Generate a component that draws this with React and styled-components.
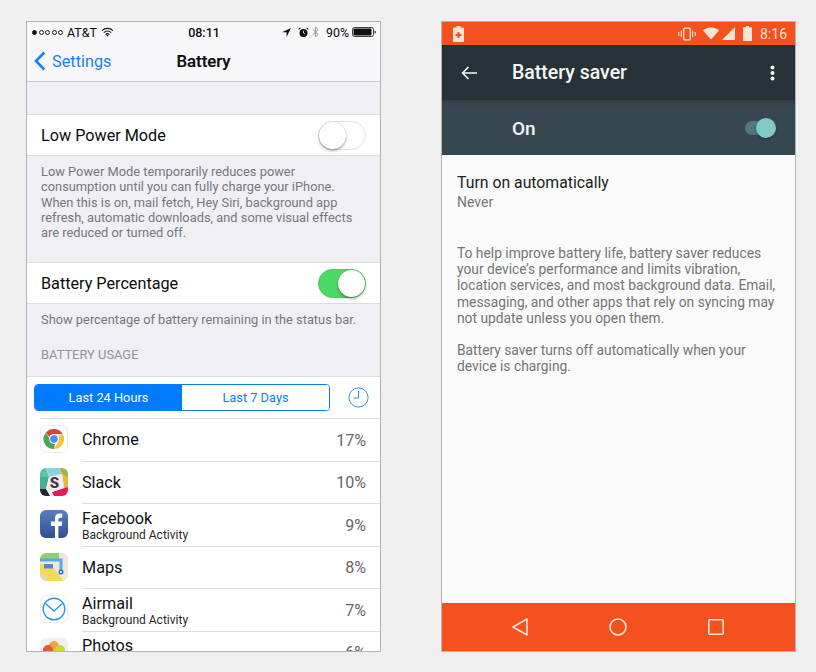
import React from "react";
import styled, { createGlobalStyle } from "styled-components";

const Global = createGlobalStyle`
  html, body { margin: 0; padding: 0; background: #efefef; }
  #root { width: 816px; height: 672px; overflow: hidden; }
`;

const Page = styled.div`
  display: flex;
  align-items: flex-start;
  gap: 60px;
  padding: 21px 0 0 26px;
`;
const Phone = styled.div`
  width: 355px;
  height: 631px;
  box-sizing: border-box;
  border: 1px solid #b4b4b6;
  overflow: hidden;
  display: flex;
  flex-direction: column;
  flex: none;
`;
const IosPhone = styled(Phone)`
  background: #efeff4;
  font-family: "Roboto", "Liberation Sans", sans-serif;
  color: #0b0b0b;
`;
const AndroidPhone = styled(Phone)`
  background: #fafafa;
  font-family: "Roboto", sans-serif;
`;

/* iOS */
const Header = styled.div`
  background: #f7f7f9;
  border-bottom: 1px solid #c9c9cd;
  height: 59px;
  flex: none;
`;
const StatusBar = styled.div`
  height: 20px;
  display: grid;
  grid-template-columns: 1fr auto 1fr;
  align-items: center;
  padding: 0 4px 0 5px;
  font-size: 12.4px;
`;
const StatusSide = styled.div`
  display: flex;
  align-items: center;
  justify-content: ${(p) => (p.$end ? "flex-end" : "flex-start")};
`;
const Dots = styled.span`
  display: inline-flex;
  gap: 1.5px;
  margin-right: 4px;
`;
const Dot = styled.i`
  width: 5px;
  height: 5px;
  box-sizing: border-box;
  border-radius: 50%;
  border: 0.7px solid #222;
  background: ${(p) => (p.$on ? "#111" : "transparent")};
`;
const StatusItem = styled.span`
  display: inline-flex;
  align-items: center;
  margin-right: ${(p) => p.$mr || 0}px;
`;
const Time = styled.span`
  font-size: 12.5px;
  font-weight: 500;
`;
const NavBar = styled.div`
  height: 38px;
  position: relative;
  display: flex;
  align-items: center;
  justify-content: center;
`;
const Back = styled.div`
  position: absolute;
  left: 7px;
  top: 9px;
  display: flex;
  align-items: center;
  gap: 6px;
  color: #1a7ff0;
  font-size: 16.3px;
`;
const NavTitle = styled.div`
  font-size: 16.8px;
  font-weight: 500;
  -webkit-text-stroke: 0.2px #0b0b0b;
`;
const Spacer = styled.div`
  height: ${(p) => p.$h}px;
  flex: none;
`;
const SettingRow = styled.div`
  height: 42px;
  flex: none;
  box-sizing: border-box;
  background: #fff;
  border-top: 1px solid #dcdce0;
  border-bottom: 1px solid #dcdce0;
  display: flex;
  align-items: center;
  justify-content: space-between;
  padding: 0 14px;
  font-size: 16.2px;
`;
const Track = styled.div`
  width: 48px;
  height: 29px;
  box-sizing: border-box;
  border-radius: 15px;
  position: relative;
  background: ${(p) => (p.$on ? "#4cd964" : "#fff")};
  border: 1px solid ${(p) => (p.$on ? "#4cc764" : "#e2e2e4")};
`;
const Knob = styled.div`
  position: absolute;
  top: 0;
  ${(p) => (p.$on ? "right: 0;" : "left: 0;")}
  width: 27px;
  height: 27px;
  border-radius: 50%;
  background: #fff;
  box-shadow: 0 2px 3px rgba(0, 0, 0, 0.3), 0 0 1px rgba(0, 0, 0, 0.3);
`;
const Note = styled.p`
  margin: 0;
  padding: ${(p) => p.$top}px 14px 0;
  height: ${(p) => p.$h}px;
  flex: none;
  box-sizing: border-box;
  font-size: 12.85px;
  line-height: 15.25px;
  color: #77777c;
`;
const SectionLabel = styled.div`
  height: 32px;
  flex: none;
  padding: 4px 14px 0;
  box-sizing: border-box;
  font-size: 12.9px;
  line-height: 14px;
  color: #939398;
`;
const Usage = styled.div`
  background: #fff;
  border-top: 1px solid #dcdce0;
  flex: 1;
  min-height: 0;
  overflow: hidden;
`;
const SegmentRow = styled.div`
  display: flex;
  align-items: center;
  padding: 7px 11px 7px 7px;
  gap: 18px;
`;
const Segments = styled.div`
  flex: 1;
  height: 27px;
  box-sizing: border-box;
  border: 1px solid #0a7cfa;
  border-radius: 4px;
  display: grid;
  grid-template-columns: 147px 1fr;
  overflow: hidden;
`;
const Segment = styled.div`
  display: flex;
  align-items: center;
  justify-content: center;
  font-size: 12.8px;
  background: ${(p) => (p.$active ? "#007aff" : "#fff")};
  color: ${(p) => (p.$active ? "#fff" : "#0a7cfa")};
`;
const AppList = styled.div`
  display: flex;
  flex-direction: column;
`;
const AppRow = styled.div`
  height: 42.5px;
  flex: none;
  box-sizing: border-box;
  margin-left: 13px;
  display: flex;
  ${(p) => p.$first && "border-top: 1px solid #dedee0;"}
`;
const AppIcon = styled.div`
  width: 28px;
  height: 28px;
  flex: none;
  margin-top: ${(p) => (p.$first ? 6 : 7)}px;
  border-radius: 6px;
  overflow: hidden;
`;
const AppBody = styled.div`
  flex: 1;
  margin-left: 14px;
  ${(p) => !p.$first && "border-top: 1px solid #dedee0;"}
  display: flex;
  align-items: ${(p) => (p.$clip ? "flex-start" : "center")};
  justify-content: space-between;
  padding: ${(p) => (p.$clip ? "5px 14px 0 0" : "1px 14px 0 0")};
`;
const AppText = styled.div`
  padding-top: ${(p) => (p.$sub ? 2 : 0)}px;
`;
const AppName = styled.div`
  font-size: 16.2px;
  line-height: 18px;
  color: #111;
`;
const AppSub = styled.div`
  font-size: 12px;
  line-height: 15px;
  color: #2a2a2a;
`;
const AppPct = styled.div`
  font-size: 16px;
  color: #66666a;
  ${(p) => p.$clip && "padding-top: 6px;"}
`;

/* Android */
const DroidStatus = styled.div`
  height: 23px;
  flex: none;
  background: #f4511e;
  display: flex;
  align-items: center;
  justify-content: space-between;
  padding: 0 8px 0 11px;
  color: #fde4da;
  font-size: 14px;
`;
const DroidIcons = styled.div`
  display: flex;
  align-items: center;
`;
const DroidIconSlot = styled.span`
  display: inline-flex;
  margin-right: ${(p) => p.$mr}px;
`;
const AppBar = styled.div`
  height: 55px;
  flex: none;
  background: #263238;
  color: #f5f7f7;
  display: flex;
  align-items: center;
  padding: 0 20px 0 19px;
  font-size: 19.5px;
  font-weight: 500;
`;
const AppBarTitle = styled.div`
  margin-left: 35px;
  flex: 1;
`;
const OnBar = styled.div`
  height: 55px;
  flex: none;
  box-sizing: border-box;
  padding: 1px 19px 0 70px;
  background: #37474f;
  box-shadow: inset 0 6px 6px -6px rgba(0, 0, 0, 0.3);
  color: #f5f7f7;
  display: flex;
  align-items: center;
  justify-content: space-between;
  font-size: 19px;
  font-weight: 500;
`;
const DroidSwitch = styled.div`
  width: 31px;
  height: 20px;
  position: relative;
`;
const DroidTrack = styled.div`
  position: absolute;
  left: 0;
  right: 2px;
  top: 3px;
  height: 14px;
  border-radius: 7px;
  background: #54767a;
`;
const DroidThumb = styled.div`
  position: absolute;
  right: 0;
  top: 0;
  width: 20px;
  height: 20px;
  border-radius: 50%;
  background: #80cbc4;
  box-shadow: 0 1px 2px rgba(0, 0, 0, 0.4);
`;
const DroidBody = styled.div`
  flex: 1;
  padding: 18px 15px 0;
  min-height: 0;
`;
const DroidTitle = styled.div`
  font-size: 15.8px;
  line-height: 19px;
  color: #212121;
`;
const DroidSub = styled.div`
  font-size: 14px;
  line-height: 20px;
  color: #757575;
  margin-bottom: 33px;
`;
const DroidPara = styled.p`
  margin: 0 0 16px;
  font-size: 13.8px;
  line-height: 16.2px;
  color: #757575;
`;
const DroidNav = styled.div`
  height: 48px;
  flex: none;
  box-sizing: border-box;
  padding-right: 2px;
  background: #f4511e;
  display: flex;
  align-items: center;
  justify-content: center;
`;
const NavKey = styled.div`
  width: 98px;
  display: flex;
  justify-content: center;
`;

/* Icons */
const Wifi = () => (
  <svg width="13" height="10" viewBox="0 0 14 11">
    <path d="M1 4a8.500 8.500 0 0 1 12 0M3 6.200a5.400 5.400 0 0 1 8 0M5 8.300a2.600 2.600 0 0 1 4 0" fill="none" stroke="#111" strokeWidth="1.300" />
    <path d="M7 10.600 5.800 9.200a1.700 1.700 0 0 1 2.400 0z" fill="#111" />
  </svg>
);
const Locate = () => (
  <svg width="9" height="9" viewBox="0 0 9 9"><path d="M9 0 0 4.200h4.600V9z" fill="#111" /></svg>
);
const Alarm = () => (
  <svg width="11" height="11" viewBox="0 0 11 11">
    <circle cx="5.500" cy="6" r="4" fill="#111" />
    <path d="M5.500 3.800V6l1.500 1" stroke="#fff" strokeWidth=".8" fill="none" />
    <path d="M.6 2.400 2.400.8M10.400 2.400 8.600.8" stroke="#111" strokeWidth="1.100" />
  </svg>
);
const Bluetooth = () => (
  <svg width="7" height="12" viewBox="0 0 7 12">
    <path d="M.7 3.200 6 8.400 3.400 11V1L6 3.600.7 8.800" fill="none" stroke="#8a8a8a" strokeWidth=".9" />
  </svg>
);
const IosBattery = () => (
  <svg width="24" height="10" viewBox="0 0 24 10">
    <rect x=".5" y=".5" width="21" height="9" rx="2" fill="none" stroke="#111" strokeWidth=".8" />
    <rect x="1.500" y="1.500" width="18" height="7" rx="1" fill="#111" />
    <path d="M22.600 3.400c.8.200 1.200.8 1.200 1.600s-.4 1.400-1.200 1.600z" fill="#111" />
  </svg>
);
const Chevron = () => (
  <svg width="12" height="20" viewBox="0 0 12 20">
    <path d="M10.300 1.500 2 10l8.300 8.500" fill="none" stroke="#1a7ff0" strokeWidth="2.600" />
  </svg>
);
const ClockIcon = () => (
  <svg width="21" height="21" viewBox="0 0 21 21">
    <circle cx="10.500" cy="10.500" r="9.600" fill="none" stroke="#2f8ff5" strokeWidth="1" />
    <path d="M10.500 4v7H5.500" fill="none" stroke="#2f8ff5" strokeWidth="1" />
  </svg>
);
const ChromeIcon = () => (
  <svg viewBox="0 0 28 28" width="28" height="28">
    <rect x=".5" y=".5" width="27" height="27" rx="6" fill="#fff" stroke="#ececee" />
    <path d="M14 4a10 10 0 0 1 8.700 5H14a5 5 0 0 0-4.600 3L6 7.400A10 10 0 0 1 14 4z" fill="#dc4437" />
    <path d="M22.700 9A10 10 0 0 1 14 24l4.300-7.500A5 5 0 0 0 18.300 11z" fill="#f7c632" />
    <path d="M14 24A10 10 0 0 1 6 7.400l4.400 7.800A5 5 0 0 0 15 19z" fill="#4aa757" />
    <circle cx="14" cy="14" r="4.800" fill="#fff" />
    <circle cx="14" cy="14" r="3.800" fill="#4a8cf0" />
  </svg>
);
const SlackIcon = () => (
  <svg viewBox="0 0 28 28" width="28" height="28">
    <rect width="28" height="28" fill="#eee" />
    <path d="M0 0h6l3 9H0z" fill="#5fc2a8" />
    <path d="M6 0h14l2 6-13 3z" fill="#8bd3dc" />
    <path d="M20 0h8v10l-6-4z" fill="#a6b23f" />
    <path d="M22 6l6 4v9l-4 1z" fill="#edb634" />
    <path d="M24 20l4-1v9H14l-2-4z" fill="#e01d5c" />
    <path d="M0 9h9l-3 12H0z" fill="#43b08f" />
    <path d="M0 21h6l4 7H0z" fill="#2f2237" />
    <path d="M9 9l13-3 2 14-12 4-6-3z" fill="#f1efee" />
    <text x="14.500" y="20" textAnchor="middle" fontFamily="Roboto, sans-serif" fontWeight="900" fontSize="15" fill="#4c3149">S</text>
  </svg>
);
const FacebookIcon = () => (
  <svg viewBox="0 0 28 28" width="28" height="28">
    <defs>
      <linearGradient id="fb" x1="0" y1="0" x2="0" y2="1">
        <stop offset="0" stopColor="#5a7fc0" />
        <stop offset="1" stopColor="#2e4f95" />
      </linearGradient>
    </defs>
    <rect width="28" height="28" fill="url(#fb)" />
    <path d="M15 28V16h-4v-4.600h4V8.200C15 5 17 3.600 19.600 3.600c1.300 0 2.400.1 2.700.2v4h-2c-1.500 0-1.900.7-1.900 1.700v1.900h3.800l-.5 4.600h-3.300v12.500z" fill="#fff" />
  </svg>
);
const MapsIcon = () => (
  <svg viewBox="0 0 28 28" width="28" height="28">
    <rect width="28" height="28" fill="#efe9dc" />
    <path d="M0 0h19v7H0z" fill="#8fd16f" />
    <path d="M19 0h9v8h-9z" fill="#f6dfe2" />
    <path d="M0 11l17 14v3H5L0 24z" fill="#dcd5c1" />
    <path d="M0 11h10l14 17H8L0 19z" fill="#f5d95a" />
    <path d="M0 7h21v14" fill="none" stroke="#5aa9ee" strokeWidth="3" />
    <path d="M4 11h9v4.500H4z" fill="#5b82d6" />
    <circle cx="21" cy="19" r="2.500" fill="#2d6fd0" />
    <circle cx="21" cy="19" r="1" fill="#fff" />
  </svg>
);
const AirmailIcon = () => (
  <svg viewBox="0 0 28 28" width="28" height="28">
    <rect x=".5" y=".5" width="27" height="27" rx="6" fill="#fff" stroke="#ececee" />
    <circle cx="14" cy="14" r="10.800" fill="none" stroke="#2f97e8" strokeWidth="1.400" />
    <path d="M5.500 8.500 14 16l8.500-7.500" fill="none" stroke="#2f97e8" strokeWidth="1.400" />
  </svg>
);
const PhotosIcon = () => (
  <svg viewBox="0 0 28 28" width="28" height="28">
    <rect width="28" height="28" fill="#f1f0f0" />
    <circle cx="14" cy="8" r="5" fill="#f2a33a" />
    <circle cx="20" cy="12" r="5" fill="#c6d73f" />
    <circle cx="8" cy="12" r="5" fill="#e9563d" />
    <circle cx="10" cy="18" r="5" fill="#d84d8c" />
    <circle cx="18" cy="18" r="5" fill="#6cc070" />
  </svg>
);
const DroidBattery = () => (
  <svg width="11" height="16" viewBox="0 0 11 16">
    <path d="M3.500 0h4v1.500H10a1 1 0 0 1 1 1V15a1 1 0 0 1-1 1H1a1 1 0 0 1-1-1V2.500a1 1 0 0 1 1-1h2.500z" fill="#fde4da" />
    <path d="M4.500 6h2v2h2v2h-2v2h-2v-2h-2V8h2z" fill="#f4511e" />
  </svg>
);
const Vibrate = () => (
  <svg width="18" height="14" viewBox="0 0 19 14">
    <rect x="6" y=".8" width="7" height="12.400" rx="1" fill="none" stroke="#fde4da" strokeWidth="1.400" />
    <path d="M3.500 3.500v7M15.500 3.500v7M.8 5v4M18.200 5v4" stroke="#fde4da" strokeWidth="1.200" />
  </svg>
);
const DroidWifi = () => (
  <svg width="16" height="13" viewBox="0 0 17 13"><path d="M0 3.300C2.300 1.200 5.200 0 8.500 0s6.200 1.200 8.500 3.300L8.500 13z" fill="#fde4da" /></svg>
);
const Signal = () => (
  <svg width="13" height="13" viewBox="0 0 14 14"><path d="M14 0v14H0z" fill="#fde4da" /></svg>
);
const FullBattery = () => (
  <svg width="9" height="15" viewBox="0 0 9 15"><path d="M3 0h3v1.300h2.200a.8.800 0 0 1 .8.800V14.200a.8.800 0 0 1-.8.800H.8a.8.800 0 0 1-.8-.8V2.100a.8.800 0 0 1 .8-.8H3z" fill="#fde4da" /></svg>
);
const ArrowLeft = () => (
  <svg width="16" height="14" viewBox="0 0 16 14">
    <path d="M16 7H1.500M7.500 1 1.500 7l6 6" fill="none" stroke="#f5f7f7" strokeWidth="1.600" />
  </svg>
);
const More = () => (
  <svg width="5" height="16" viewBox="0 0 5 16" fill="#f5f7f7">
    <circle cx="2.500" cy="2.500" r="2" /><circle cx="2.500" cy="8" r="2" /><circle cx="2.500" cy="13.500" r="2" />
  </svg>
);
const NavBack = () => (
  <svg width="16" height="18" viewBox="0 0 16 18"><path d="M15 1v16L1 9z" fill="none" stroke="#fde4da" strokeWidth="1.600" strokeLinejoin="round" /></svg>
);
const NavHome = () => (
  <svg width="18" height="18" viewBox="0 0 18 18"><circle cx="9" cy="9" r="8" fill="none" stroke="#fde4da" strokeWidth="1.600" /></svg>
);
const NavRecent = () => (
  <svg width="16" height="16" viewBox="0 0 16 16"><rect x=".8" y=".8" width="14.400" height="14.400" rx="1" fill="none" stroke="#fde4da" strokeWidth="1.600" /></svg>
);

const apps = [
  { name: "Chrome", pct: "17%", Icon: ChromeIcon },
  { name: "Slack", pct: "10%", Icon: SlackIcon },
  { name: "Facebook", sub: "Background Activity", pct: "9%", Icon: FacebookIcon },
  { name: "Maps", pct: "8%", Icon: MapsIcon },
  { name: "Airmail", sub: "Background Activity", pct: "7%", Icon: AirmailIcon },
  { name: "Photos", pct: "6%", Icon: PhotosIcon, clip: true },
];

export default function App() {
  return (
    <>
      <Global />
      <Page>
        <IosPhone>
          <Header>
            <StatusBar>
              <StatusSide>
                <Dots>
                  <Dot $on /><Dot /><Dot /><Dot /><Dot />
                </Dots>
                <StatusItem $mr={4}>AT&amp;T</StatusItem>
                <Wifi />
              </StatusSide>
              <Time>08:11</Time>
              <StatusSide $end>
                <StatusItem $mr={7}><Locate /></StatusItem>
                <StatusItem $mr={3}><Alarm /></StatusItem>
                <StatusItem $mr={7}><Bluetooth /></StatusItem>
                <StatusItem $mr={3}>90%</StatusItem>
                <IosBattery />
              </StatusSide>
            </StatusBar>
            <NavBar>
              <Back>
                <Chevron />
                Settings
              </Back>
              <NavTitle>Battery</NavTitle>
            </NavBar>
          </Header>
          <Spacer $h={32} />
          <SettingRow>
            Low Power Mode
            <Track><Knob /></Track>
          </SettingRow>
          <Note $h={106} $top={8}>
            Low Power Mode temporarily reduces power consumption until you can fully charge your iPhone. When this is on, mail fetch, Hey Siri, background app refresh, automatic downloads, and some visual effects are reduced or turned off.
          </Note>
          <SettingRow>
            Battery Percentage
            <Track $on><Knob $on /></Track>
          </SettingRow>
          <Note $h={40} $top={8}>Show percentage of battery remaining in the status bar.</Note>
          <SectionLabel>BATTERY USAGE</SectionLabel>
          <Usage>
            <SegmentRow>
              <Segments>
                <Segment $active>Last 24 Hours</Segment>
                <Segment>Last 7 Days</Segment>
              </Segments>
              <ClockIcon />
            </SegmentRow>
            <AppList>
              {apps.map((a, i) => (
                <AppRow key={a.name} $first={i === 0}>
                  <AppIcon $first={i === 0}><a.Icon /></AppIcon>
                  <AppBody $first={i === 0} $clip={a.clip}>
                    <AppText $sub={!!a.sub}>
                      <AppName>{a.name}</AppName>
                      {a.sub && <AppSub>{a.sub}</AppSub>}
                    </AppText>
                    <AppPct $clip={a.clip}>{a.pct}</AppPct>
                  </AppBody>
                </AppRow>
              ))}
            </AppList>
          </Usage>
        </IosPhone>
        <AndroidPhone>
          <DroidStatus>
            <DroidBattery />
            <DroidIcons>
              <DroidIconSlot $mr={7}><Vibrate /></DroidIconSlot>
              <DroidIconSlot $mr={3}><DroidWifi /></DroidIconSlot>
              <DroidIconSlot $mr={8}><Signal /></DroidIconSlot>
              <DroidIconSlot $mr={8}><FullBattery /></DroidIconSlot>
              <span>8:16</span>
            </DroidIcons>
          </DroidStatus>
          <AppBar>
            <ArrowLeft />
            <AppBarTitle>Battery saver</AppBarTitle>
            <More />
          </AppBar>
          <OnBar>
            On
            <DroidSwitch><DroidTrack /><DroidThumb /></DroidSwitch>
          </OnBar>
          <DroidBody>
            <DroidTitle>Turn on automatically</DroidTitle>
            <DroidSub>Never</DroidSub>
            <DroidPara>To help improve battery life, battery saver reduces your device’s performance and limits vibration, location services, and most background data. Email, messaging, and other apps that rely on syncing may not update unless you open them.</DroidPara>
            <DroidPara>Battery saver turns off automatically when your device is charging.</DroidPara>
          </DroidBody>
          <DroidNav>
            <NavKey><NavBack /></NavKey>
            <NavKey><NavHome /></NavKey>
            <NavKey><NavRecent /></NavKey>
          </DroidNav>
        </AndroidPhone>
      </Page>
    </>
  );
}
